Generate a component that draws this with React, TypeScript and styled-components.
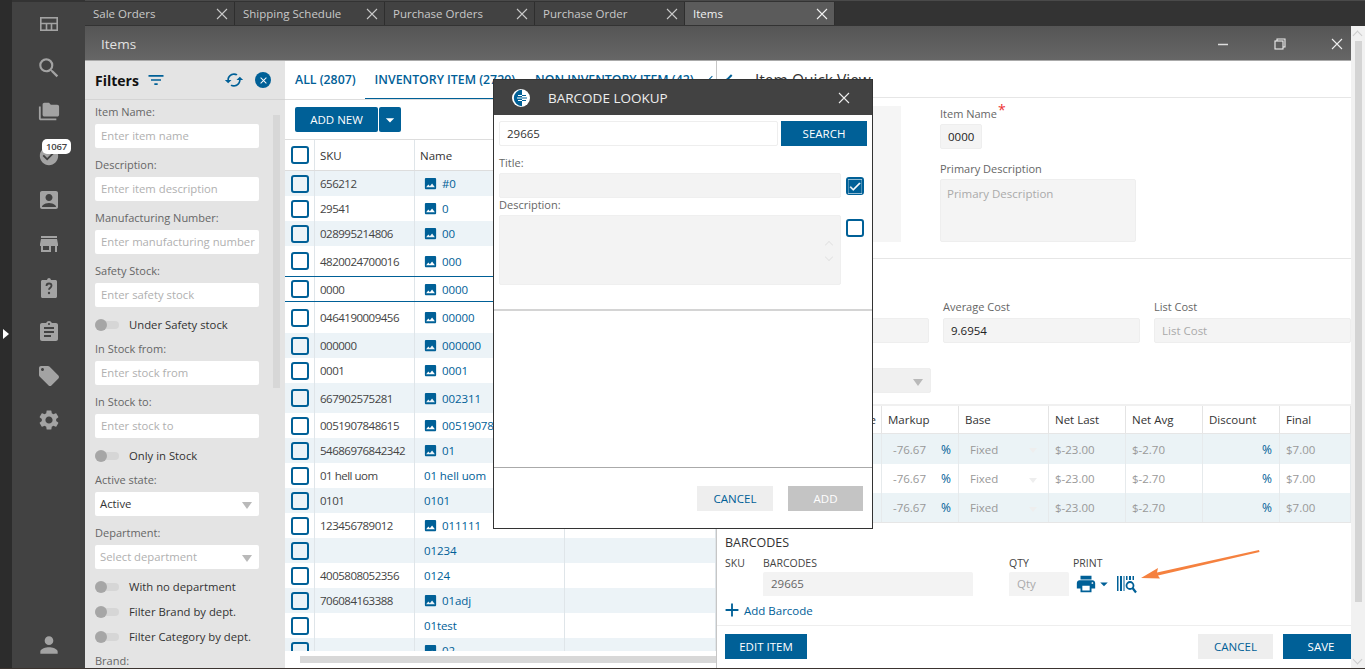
import React from "react";
import styled, { createGlobalStyle } from "styled-components";
import {
  MdSearch, MdFolderCopy, MdCheckCircle, MdAccountBox, MdStore, MdAssignment,
  MdLocalOffer, MdSettings, MdPerson, MdFilterList, MdPhoto, MdPrint, MdArrowDropDown, MdAdd, MdCheck,
  MdClose, MdSync,
} from "react-icons/md";

const BLUE = "#006097";
const FONT = `"Open Sans", "Noto Sans", sans-serif`;

const Global = createGlobalStyle`
  html, body { margin: 0; padding: 0; background: #333; overflow: hidden; }
  * { box-sizing: border-box; }
  body { font-family: ${FONT}; font-size: 11.5px; color: #333; }
  input, textarea { font-family: ${FONT}; }
`;

const Page = styled.div`
  position: relative; width: 1365px; height: 669px; display: flex; overflow: hidden;
  border-bottom: 1px solid #3b3430; background: #333;
`;
const Strip = styled.div`position: relative; width: 12px; background: #2c2c2c; flex: none;`;
const StripArrow = styled.div`
  position: absolute; left: 3px; top: 329px; width: 0; height: 0;
  border-left: 6px solid #fff; border-top: 5px solid transparent; border-bottom: 5px solid transparent;
`;
const Side = styled.nav`
  width: 73px; flex: none; margin-top: 2px; background: #424242; display: flex; flex-direction: column; align-items: center; color: #a3a3a3;
`;
const SideCell = styled.div`position: relative; height: 44px; width: 100%; display: flex; align-items: center; justify-content: center;`;
const SideBottom = styled(SideCell)`margin-top: auto; margin-bottom: 1px;`;
const Badge = styled.span`
  position: absolute; left: 30px; top: 5px; width: 29px; height: 15px; background: #fff; color: #444; border-radius: 5px;
  font-size: 9.5px; font-weight: 600; text-align: center; line-height: 15px; letter-spacing: -.2px;
`;
const Main = styled.div`flex: 1; min-width: 0; display: flex; flex-direction: column;`;
const TabBar = styled.div`height: 26px; flex: none; display: flex; padding-top: 2px; background: #333; box-shadow: inset 0 1px 0 #4a4a4a;`;
const Tab = styled.div<{ $active?: boolean }>`
  width: 150px; height: 23px; display: flex; align-items: center; justify-content: space-between; padding: 0 5px 0 8px;
  background: ${p => (p.$active ? "#5b5b5b" : "#424242")}; color: ${p => (p.$active ? "#f2f2f2" : "#c9c9c9")};
  border-right: 1px solid #2e2e2e; font-size: 11.5px;
`;
const Shell = styled.div`flex: 1; min-height: 0; display: flex;`;
const WindowBox = styled.div`flex: 1; min-width: 0; display: flex; flex-direction: column;`;
const Title = styled.div`
  height: 35px; flex: none; background: linear-gradient(#555, #666); color: #e2e2e2; display: flex; align-items: center;
  padding: 1px 7px 0 16px; font-size: 13.5px; border-bottom: 1px solid #aaa;
`;
const TitleName = styled.span`flex: 1;`;
const WinBtns = styled.div`display: flex; gap: 43px; align-items: center; color: #eee;`;
const OuterScroll = styled.div`position: relative; width: 14px; flex: none; padding: 15px 3px 0 4px; background: #f1f1f1;`;
const OuterThumb = styled.div`height: 561px; background: #d4d4d4;`;
const ScrollChevron = styled.div<{ $down?: boolean; $x?: number; $y?: number }>`
  position: absolute; left: ${p => p.$x ?? 3}px; top: ${p => p.$y ?? 7}px; width: 7px; height: 7px; border-left: 1px solid #ccc; border-top: 1px solid #ccc;
  transform: rotate(${p => (p.$down ? "225deg" : "45deg")});
`;
const WinBody = styled.div`flex: 1; min-height: 0; display: flex; background: #fff;`;

/* Filters */
const Filters = styled.aside`width: 200px; flex: none; background: #e4e4e4; display: flex; flex-direction: column; overflow: hidden;`;
const FilterHead = styled.div`height: 39px; flex: none; display: flex; align-items: center; padding: 0 14px 0 10px; border-bottom: 1px solid #d4d4d4;`;
const FilterTitle = styled.span`font-size: 14px; font-weight: 700; color: #111; margin-right: 7px;`;
const HeadRight = styled.div`margin-left: auto; display: flex; align-items: center; gap: 11px; color: ${BLUE};`;
const RoundClose = styled.span`width: 16px; height: 16px; border-radius: 50%; background: ${BLUE}; display: flex; align-items: center; justify-content: center; color: #fff;`;
const FilterBody = styled.div`flex: 1; position: relative; min-height: 0; overflow: hidden; padding: 3px 26px 0 10px;`;
const FilterThumb = styled.div`position: absolute; right: 5px; top: 15px; width: 7px; height: 273px; background: #d7d7d7;`;
const FLabel = styled.div`height: 18px; line-height: 18px; margin-bottom: 3px; color: #666; font-size: 11px;`;
const FInput = styled.div`
  position: relative; height: 24px; width: 164px; background: #fff; border-radius: 2px; margin-bottom: 8px; padding-left: 6px; line-height: 24px;
  color: #b0b0b0; font-size: 11.3px; white-space: nowrap; overflow: hidden;
`;
const FSelect = styled(FInput)<{ $dark?: boolean }>`padding-left: 5px; color: ${p => (p.$dark ? "#333" : "#b0b0b0")};`;
const Caret = styled.span`
  position: absolute; right: 7px; top: 10px; width: 0; height: 0; border-left: 5px solid transparent; border-right: 5px solid transparent; border-top: 7px solid #b9b9b9;
`;
const ToggleRow = styled.div`height: 20px; display: flex; align-items: center; gap: 10px; margin-bottom: 5px; color: #333; font-size: 11.3px;`;
const ToggleText = styled.span`margin-top: -2px;`;
const Toggle = styled.span`
  position: relative; width: 24px; height: 8px; background: #d6d6d6; border-radius: 4px; flex: none;
  &::after { content: ""; position: absolute; left: 0; top: -2px; width: 12px; height: 12px; border-radius: 50%; background: #a6a6a6; }
`;

/* List */
const ListPane = styled.section`width: 432px; flex: none; display: flex; flex-direction: column; overflow: hidden; border-right: 1px solid #c6c6c6;`;
const ListTabs = styled.div`height: 39px; flex: none; display: flex; align-items: stretch; border-bottom: 1px solid #ddd; padding-left: 10px; white-space: nowrap; overflow: hidden; position: relative;`;
const ListTab = styled.div<{ $on?: boolean }>`
  display: flex; align-items: center; color: ${BLUE}; font-weight: 600; font-size: 12.3px; margin-bottom: -1px;
  padding: 0 ${p => (p.$on ? "10px" : "0")}; margin-right: ${p => (p.$on ? "10px" : "0")}; margin-left: ${p => (p.$on ? "9px" : "0")};
  border-bottom: 2px solid ${p => (p.$on ? BLUE : "transparent")};
`;
const TabChevron = styled.span`position: absolute; right: 1px; top: 16px; width: 6px; height: 6px; border-left: 1.5px solid ${BLUE}; border-bottom: 1.5px solid ${BLUE}; transform: rotate(45deg);`;
const ToolBar = styled.div`height: 40px; flex: none; padding: 7px 0 0 10px; display: flex; gap: 1px; border-bottom: 1px solid #ddd;`;
const PrimaryBtn = styled.button`
  height: 25px; border: 0; border-radius: 2px; background: ${BLUE}; color: #fff; font-family: ${FONT}; font-size: 11.5px; padding: 0; display: flex; align-items: center; justify-content: center;
`;
const AddBtn = styled(PrimaryBtn)`width: 83px;`;
const DropBtn = styled(PrimaryBtn)`width: 22px;`;
const Grid = styled.div`flex: 1; min-height: 0; overflow: hidden;`;
const GridRow = styled.div<{ $h: number; $stripe?: boolean; $lines?: boolean }>`
  height: ${p => p.$h}px; display: grid; grid-template-columns: 30px 100px 150px 151px; align-items: stretch;
  background: ${p => (p.$stripe ? "#ecf3f7" : "#fff")};
  ${p => (p.$lines ? `border-top: 1px solid ${BLUE}; border-bottom: 1px solid ${BLUE};` : "")}
`;
const GridHeadRow = styled(GridRow)`border-bottom: 1px solid #ddd; color: #333;`;
const Cell = styled.div`display: flex; align-items: center; padding-left: 5px; border-right: 1px solid #dfe5e9; white-space: nowrap; overflow: hidden; font-size: 11.5px; color: #444;`;
const SkuCell = styled(Cell)`letter-spacing: -.5px;`;
const CheckCell = styled(Cell)`padding-left: 6px;`;
const NameCell = styled(Cell)<{ $icon?: boolean }>`
  color: ${BLUE}; padding-left: ${p => (p.$icon ? "8px" : "9px")}; gap: 4px; letter-spacing: -.1px;
`;
const HeadCell = styled(Cell)`color: #333; font-size: 11.5px;`;
const Box = styled.span<{ $on?: boolean }>`
  width: 18px; height: 18px; flex: none; border: 2px solid ${BLUE}; border-radius: 3px; display: flex; align-items: center; justify-content: center;
  background: ${p => (p.$on ? BLUE : "transparent")}; color: #fff;
`;
const HScroll = styled.div`height: 17px; flex: none; background: #fff; padding: 5px 0 5px 15px; position: relative;`;
const HThumb = styled.div`height: 7px; background: #d8d8d8;`;

/* Quick view */
const Quick = styled.section`flex: 1; min-width: 0; display: flex; flex-direction: column; overflow: hidden; background: #fff;`;
const QuickHead = styled.div`height: 37px; flex: none; display: flex; align-items: center; gap: 20px; padding: 2px 0 0 10px; border-bottom: 1px solid #e6e6e6; font-size: 15.5px; color: #333;`;
const Back = styled.span`width: 8px; height: 8px; border-left: 2px solid ${BLUE}; border-bottom: 2px solid ${BLUE}; transform: rotate(45deg);`;
const TopSection = styled.div`height: 161px; flex: none; display: flex; gap: 39px; padding: 8px 0 0 8px; border-bottom: 1px solid #e6e6e6;`;
const ImageBox = styled.div`width: 176px; height: 136px; background: #f5f5f5;`;
const TopCol = styled.div`display: flex; flex-direction: column; align-items: flex-start;`;
const QLabel = styled.div`position: relative; color: #666; font-size: 11px; height: 16px; line-height: 16px; white-space: nowrap;`;
const Star = styled.span`position: absolute; left: 100%; top: -3px; color: #e33; font-size: 14px; line-height: 14px; padding-left: 1px;`;
const QInput = styled.div<{ $w?: string; $h?: number; $ph?: boolean }>`
  width: ${p => p.$w ?? "100%"}; height: ${p => p.$h ?? 25}px; background: #f4f4f4; border: 1px solid #eee; border-radius: 2px; padding: 0 0 0 7px;
  line-height: 23px; font-size: 11.5px; color: ${p => (p.$ph ? "#aaa" : "#222")}; position: relative;
`;
const NameInput = styled(QInput)`margin: 2px 0 12px;`;
const DescInput = styled(QInput)`margin-top: 2px; line-height: 28px; padding-left: 6px;`;
const CostSection = styled.div`height: 145px; flex: none; padding: 40px 0 0 15px;`;
const CostRow = styled.div`display: grid; grid-template-columns: 197px 197px 197px; gap: 14px; width: 640px;`;
const CostCol = styled.div`display: flex; flex-direction: column; gap: 3px;`;
const SelectBox = styled(QInput)`margin-top: 25px; background: #f0f0f0;`;
const PriceHead = styled.div`
  height: 30px; flex: none; display: grid; grid-template-columns: 165px 77px 90px 77px 77px 77px 71px; border-top: 2px solid #f0f0f0; border-bottom: 1px solid #e6e6e6;
`;
const PH = styled.div<{ $r?: boolean }>`display: flex; align-items: center; padding-left: 6px; border-right: 1px solid #e4e4e4; font-size: 11.5px; color: #333; ${p => (p.$r ? "justify-content: flex-end; padding-right: 5px;" : "")}`;
const PriceRow = styled.div<{ $stripe?: boolean; $h: number }>`
  height: ${p => p.$h}px; flex: none; display: grid; grid-template-columns: 165px 77px 90px 77px 77px 77px 71px; background: ${p => (p.$stripe ? "#ebf3f6" : "#fff")};
  color: #999; font-size: 11.5px;
`;
const PD = styled.div`display: flex; align-items: center; padding: 0 0 0 6px; border-right: 1px solid #e6eaec; position: relative;`;
const PDPad = styled(PD)`padding-left: 11px;`;
const Pct = styled.span`color: ${BLUE}; margin-left: auto; padding-right: 7px; font-size: 12px;`;
const MiniCaret = styled.span`position: absolute; right: 11px; top: 14px; width: 0; height: 0; border-left: 4px solid transparent; border-right: 4px solid transparent; border-top: 5px solid #eee;`;
const Barcodes = styled.div`flex: none; height: 103px; padding: 11px 0 0 8px; border-top: 1px solid #e6e6e6;`;
const BarTitle = styled.div`font-size: 12.5px; color: #333; height: 17px; line-height: 17px; font-weight: 500;`;
const BarGrid = styled.div`display: grid; grid-template-columns: 38px 246px 64px auto; margin-top: 3px; justify-content: start;`;
const BarLabel = styled.div`font-size: 10.5px; color: #444; height: 18px; line-height: 18px;`;
const BarInput = styled.div<{ $w: number; $ph?: boolean }>`
  width: ${p => p.$w}px; height: 24px; background: #f3f3f3; border-radius: 2px 2px 0 0; line-height: 24px; padding-left: 8px; font-size: 11.5px; color: ${p => (p.$ph ? "#aaa" : "#666")};
`;
const PrintTools = styled.div`display: flex; align-items: center; color: ${BLUE}; height: 24px; padding-left: 2px;`;
const BarSearch = styled.span`margin-left: 4px; display: flex;`;
const AddLink = styled.div`display: flex; align-items: center; gap: 1px; color: ${BLUE}; height: 20px; margin-top: 4px; margin-left: -4px; font-size: 11.5px;`;
const QFoot = styled.div`flex: 1; min-height: 0; display: flex; align-items: flex-start; gap: 10px; border-top: 1px solid #eee; padding: 8px 0 0 8px; margin-right: -8px;`;
const EditBtn = styled(PrimaryBtn)`width: 82px; margin-right: auto; border-radius: 0;`;
const SaveBtn = styled(PrimaryBtn)`width: 76px; flex: none; border-radius: 0;`;
const GreyBtn = styled.button<{ $w: number }>`
  width: ${p => p.$w}px; height: 25px; border: 0; background: #eee; color: ${BLUE}; font-family: ${FONT}; font-size: 11.5px; padding: 0;
`;

/* Modal */
const Modal = styled.div`
  position: absolute; left: 493px; top: 79px; width: 380px; height: 450px; background: #fff; border: 1px solid #333; display: flex; flex-direction: column;
`;
const ModalHead = styled.div`height: 35px; flex: none; background: #424242; color: #eee; display: flex; align-items: center; padding: 0 21px 0 18px; font-size: 13.5px;`;
const ModalTitle = styled.span`margin-left: 18px; flex: 1;`;
const ModalForm = styled.div`height: 196px; flex: none; padding: 6px 5px 0 5px; border-bottom: 2px solid #d4d4d4;`;
const SearchRow = styled.div`display: flex; gap: 3px;`;
const SearchInput = styled.div`width: 279px; height: 25px; border: 1px solid #eee; border-radius: 2px; line-height: 23px; padding-left: 7px; color: #333; font-size: 11.5px;`;
const SearchBtn = styled(PrimaryBtn)`width: 86px; border-radius: 0;`;
const MLabel = styled.div<{ $top: number }>`height: 16px; line-height: 16px; margin-top: ${p => p.$top}px; color: #666; font-size: 11px; margin-bottom: 2px;`;
const FieldRow = styled.div`display: flex; gap: 5px; align-items: flex-start;`;
const DisabledField = styled.div<{ $h: number }>`position: relative; width: 342px; height: ${p => p.$h}px; background: #f3f3f3; border: 1px solid #efefef; border-radius: 2px;`;
const BoxSlot = styled.div`padding-top: 4px;`;
const ModalSpace = styled.div`height: 157px; flex: none; border-bottom: 1px solid #aaa;`;
const ModalFoot = styled.div`flex: 1; display: flex; justify-content: flex-end; align-items: flex-start; gap: 15px; padding: 18px 9px 0 0;`;
const DisabledBtn = styled.button`width: 75px; height: 25px; border: 0; background: #c4c4c4; color: #fff; font-family: ${FONT}; font-size: 11.5px; padding: 0;`;
const SpinUp = styled.div`position: absolute; right: 8px; top: 26px; width: 6px; height: 6px; border-left: 1px solid #e4e4e4; border-top: 1px solid #e4e4e4; transform: rotate(45deg);`;
const SpinDown = styled.div`position: absolute; right: 8px; top: 38px; width: 6px; height: 6px; border-right: 1px solid #e4e4e4; border-bottom: 1px solid #e4e4e4; transform: rotate(45deg);`;
const ArrowOverlay = styled.svg`position: absolute; left: 1130px; top: 540px; pointer-events: none;`;

const X = ({ s = 14, c = "currentColor" }: { s?: number; c?: string }) => (
  <svg width={s} height={s} viewBox="0 0 14 14" fill="none" stroke={c} strokeWidth="1.1"><path d="M2 2l10 10M12 2L2 12" /></svg>
);
const GridIcon = () => (
  <svg width="18" height="14" viewBox="0 0 18 14" fill="none" stroke="#a3a3a3" strokeWidth="1.6"><rect x=".8" y=".8" width="16.4" height="12.4" /><path d="M1 6.5h16M6.5 6.5V13M11.5 6.5V13" /></svg>
);
const ClipQ = () => (
  <svg width="24" height="24" viewBox="0 0 24 24"><path fill="#a3a3a3" d="M5.5 4H10c.3-1.3 1-2 2-2s1.700.7 2 2h4.500c.8 0 1.500.7 1.500 1.500v15c0 .8-.7 1.500-1.500 1.500h-13C4.700 22 4 21.300 4 20.500v-15C4 4.700 4.700 4 5.500 4z" /><path fill="none" stroke="#424242" strokeWidth="1.800" d="M9.500 10c0-1.500 1.100-2.500 2.500-2.500s2.500 1 2.500 2.300c0 1.900-2.500 2-2.500 4" /><circle cx="12" cy="17" r="1.200" fill="#424242" /></svg>
);
const Logo = () => (
  <svg width="18" height="18" viewBox="0 0 18 18"><circle cx="9" cy="9" r="9" fill="#fff" /><path d="M10 .8a8.200 8.200 0 0 0 0 16.400z" fill={BLUE} /><path d="M10 6.500h4M10 9h5M10 11.500h4" stroke={BLUE} strokeWidth="1.100" /><path d="M6 6.500h4M5 9h5M6 11.500h4" stroke="#fff" strokeWidth="1.100" /></svg>
);
const BarcodeSearch = () => (
  <svg width="20" height="19" viewBox="0 0 20 19" fill={BLUE}>
    <path d="M0 1h1.500v15H0zM3 1h2v15H3zM6.500 1h1v15h-1zM9 1h1.500v4H9zM12 1h2v4h-2zM15.500 1h1.500v4h-1.500z" />
    <circle cx="13" cy="10.500" r="3.500" fill="none" stroke={BLUE} strokeWidth="1.800" />
    <path d="M15.500 13l3.500 4.500" stroke={BLUE} strokeWidth="2.200" />
  </svg>
);

const tabs = ["Sale Orders", "Shipping Schedule", "Purchase Orders", "Purchase Order"];
const rows: [string, string, boolean, number][] = [
  ["656212", "#0", true, 25], ["29541", "0", true, 25], ["028995214806", "00", true, 25], ["4820024700016", "000", true, 30],
  ["0000", "0000", true, 26], ["0464190009456", "00000", true, 31], ["000000", "000000", true, 25], ["0001", "0001", true, 25],
  ["667902575281", "002311", true, 30], ["0051907848615", "00519078486", true, 25], ["54686976842342", "01", true, 25],
  ["01 hell uom", "01 hell uom", false, 25], ["0101", "0101", false, 25], ["123456789012", "011111", true, 25],
  ["", "01234", false, 25], ["4005808052356", "0124", false, 25], ["706084163388", "01adj", true, 25], ["", "01test", false, 25], ["", "02", true, 25],
];
const prices = [[true, 30], [false, 29], [true, 29]] as [boolean, number][];

const Field = ({ label, ph }: { label: string; ph: string }) => (
  <>
    <FLabel>{label}</FLabel>
    <FInput>{ph}</FInput>
  </>
);
const Tog = ({ children }: { children: React.ReactNode }) => (
  <ToggleRow><Toggle /><ToggleText>{children}</ToggleText></ToggleRow>
);

export default function App() {
  return (
    <Page>
      <Global />
      <Strip><StripArrow /></Strip>
      <Side>
        <SideCell><GridIcon /></SideCell>
        <SideCell><MdSearch size={26} /></SideCell>
        <SideCell><MdFolderCopy size={22} /></SideCell>
        <SideCell><MdCheckCircle size={22} /><Badge>1067</Badge></SideCell>
        <SideCell><MdAccountBox size={24} /></SideCell>
        <SideCell><MdStore size={24} /></SideCell>
        <SideCell><ClipQ /></SideCell>
        <SideCell><MdAssignment size={24} /></SideCell>
        <SideCell><MdLocalOffer size={24} /></SideCell>
        <SideCell><MdSettings size={24} /></SideCell>
        <SideBottom><MdPerson size={26} /></SideBottom>
      </Side>
      <Main>
        <TabBar>
          {tabs.map(t => <Tab key={t}>{t}<X /></Tab>)}
          <Tab $active>Items<X /></Tab>
        </TabBar>
        <Shell>
          <WindowBox>
            <Title>
              <TitleName>Items</TitleName>
              <WinBtns>
                <svg width="14" height="14" viewBox="0 0 14 14" stroke="#ddd" strokeWidth="1.500"><path d="M2 7.500h10" /></svg>
                <svg width="14" height="14" viewBox="0 0 14 14" fill="none" stroke="#eee" strokeWidth="1.100"><rect x="2" y="4" width="8" height="8" /><path d="M4 4V2h8v8h-2" /></svg>
                <X />
              </WinBtns>
            </Title>
            <WinBody>
              <Filters>
                <FilterHead>
                  <FilterTitle>Filters</FilterTitle>
                  <MdFilterList size={20} color={BLUE} />
                  <HeadRight>
                    <MdSync size={20} style={{ transform: "rotate(90deg)" }} />
                    <RoundClose><MdClose size={11} /></RoundClose>
                  </HeadRight>
                </FilterHead>
                <FilterBody>
                  <FilterThumb />
                  <Field label="Item Name:" ph="Enter item name" />
                  <Field label="Description:" ph="Enter item description" />
                  <Field label="Manufacturing Number:" ph="Enter manufacturing number" />
                  <Field label="Safety Stock:" ph="Enter safety stock" />
                  <Tog>Under Safety stock</Tog>
                  <Field label="In Stock from:" ph="Enter stock from" />
                  <Field label="In Stock to:" ph="Enter stock to" />
                  <Tog>Only in Stock</Tog>
                  <FLabel>Active state:</FLabel>
                  <FSelect $dark>Active<Caret /></FSelect>
                  <FLabel>Department:</FLabel>
                  <FSelect>Select department<Caret /></FSelect>
                  <Tog>With no department</Tog>
                  <Tog>Filter Brand by dept.</Tog>
                  <Tog>Filter Category by dept.</Tog>
                  <FLabel>Brand:</FLabel>
                </FilterBody>
              </Filters>
              <ListPane>
                <ListTabs>
                  <ListTab>ALL (2807)</ListTab>
                  <ListTab $on>INVENTORY ITEM (2720)</ListTab>
                  <ListTab>NON INVENTORY ITEM (42)</ListTab>
                  <TabChevron />
                </ListTabs>
                <ToolBar>
                  <AddBtn>ADD NEW</AddBtn>
                  <DropBtn><MdArrowDropDown size={20} /></DropBtn>
                </ToolBar>
                <Grid>
                  <GridHeadRow $h={31}>
                    <CheckCell><Box /></CheckCell>
                    <HeadCell>SKU</HeadCell>
                    <HeadCell>Name</HeadCell>
                    <HeadCell />
                  </GridHeadRow>
                  {rows.map((r, i) => (
                    <GridRow key={r[1]} $h={r[3]} $stripe={i % 2 === 0 && i !== 4} $lines={i === 4}>
                      <CheckCell><Box /></CheckCell>
                      <SkuCell>{r[0]}</SkuCell>
                      <NameCell $icon={r[2]}>{r[2] && <MdPhoto size={15} />}{r[1]}</NameCell>
                      <Cell />
                    </GridRow>
                  ))}
                </Grid>
                <HScroll><HThumb /></HScroll>
              </ListPane>
              <Quick>
                <QuickHead><Back />Item Quick View</QuickHead>
                <TopSection>
                  <ImageBox />
                  <TopCol>
                    <QLabel>Item Name<Star>*</Star></QLabel>
                    <NameInput $w="42px">0000</NameInput>
                    <QLabel>Primary Description</QLabel>
                    <DescInput $w="196px" $h={63} $ph>Primary Description</DescInput>
                  </TopCol>
                </TopSection>
                <CostSection>
                  <CostRow>
                    <CostCol><QLabel>Last Cost</QLabel><QInput /></CostCol>
                    <CostCol><QLabel>Average Cost</QLabel><QInput>9.6954</QInput></CostCol>
                    <CostCol><QLabel>List Cost</QLabel><QInput $ph>List Cost</QInput></CostCol>
                  </CostRow>
                  <SelectBox $w="199px"><Caret /></SelectBox>
                </CostSection>
                <PriceHead>
                  <PH $r>Price</PH><PH>Markup</PH><PH>Base</PH><PH>Net Last</PH><PH>Net Avg</PH><PH>Discount</PH><PH>Final</PH>
                </PriceHead>
                {prices.map(([s, h], i) => (
                  <PriceRow key={i} $stripe={s} $h={h}>
                    <PD />
                    <PDPad>-76.67<Pct>%</Pct></PDPad>
                    <PDPad>Fixed<MiniCaret /></PDPad>
                    <PD>$-23.00</PD>
                    <PD>$-2.70</PD>
                    <PD><Pct>%</Pct></PD>
                    <PD>$7.00</PD>
                  </PriceRow>
                ))}
                <Barcodes>
                  <BarTitle>BARCODES</BarTitle>
                  <BarGrid>
                    <BarLabel>SKU</BarLabel><BarLabel>BARCODES</BarLabel><BarLabel>QTY</BarLabel><BarLabel>PRINT</BarLabel>
                    <span /><BarInput $w={210}>29665</BarInput><BarInput $w={60} $ph>Qty</BarInput>
                    <PrintTools><MdPrint size={22} /><MdArrowDropDown size={18} style={{ marginLeft: -2 }} /><BarSearch><BarcodeSearch /></BarSearch></PrintTools>
                  </BarGrid>
                  <AddLink><MdAdd size={22} />Add Barcode</AddLink>
                </Barcodes>
                <QFoot>
                  <EditBtn>EDIT ITEM</EditBtn>
                  <GreyBtn $w={75}>CANCEL</GreyBtn>
                  <SaveBtn>SAVE</SaveBtn>
                </QFoot>
              </Quick>
            </WinBody>
          </WindowBox>
          <OuterScroll>
            <ScrollChevron $x={3} $y={6} />
            <OuterThumb />
            <ScrollChevron $down $x={3} $y={630} />
          </OuterScroll>
        </Shell>
      </Main>
      <Modal>
        <ModalHead>
          <Logo />
          <ModalTitle>BARCODE LOOKUP</ModalTitle>
          <X />
        </ModalHead>
        <ModalForm>
          <SearchRow>
            <SearchInput>29665</SearchInput>
            <SearchBtn>SEARCH</SearchBtn>
          </SearchRow>
          <MLabel $top={9}>Title:</MLabel>
          <FieldRow>
            <DisabledField $h={25} />
            <BoxSlot><Box $on><MdCheck size={15} stroke="currentColor" strokeWidth={1} /></Box></BoxSlot>
          </FieldRow>
          <MLabel $top={-1}>Description:</MLabel>
          <FieldRow>
            <DisabledField $h={70}><SpinUp /><SpinDown /></DisabledField>
            <BoxSlot><Box /></BoxSlot>
          </FieldRow>
        </ModalForm>
        <ModalSpace />
        <ModalFoot>
          <GreyBtn $w={76}>CANCEL</GreyBtn>
          <DisabledBtn>ADD</DisabledBtn>
        </ModalFoot>
      </Modal>
      <ArrowOverlay width="135" height="45" viewBox="0 0 135 45">
        <path d="M11 38L28 28L27 32.500L129 10L129.500 12L28 35.500L30 38.500z" fill="#f5813f" />
      </ArrowOverlay>
    </Page>
  );
}
